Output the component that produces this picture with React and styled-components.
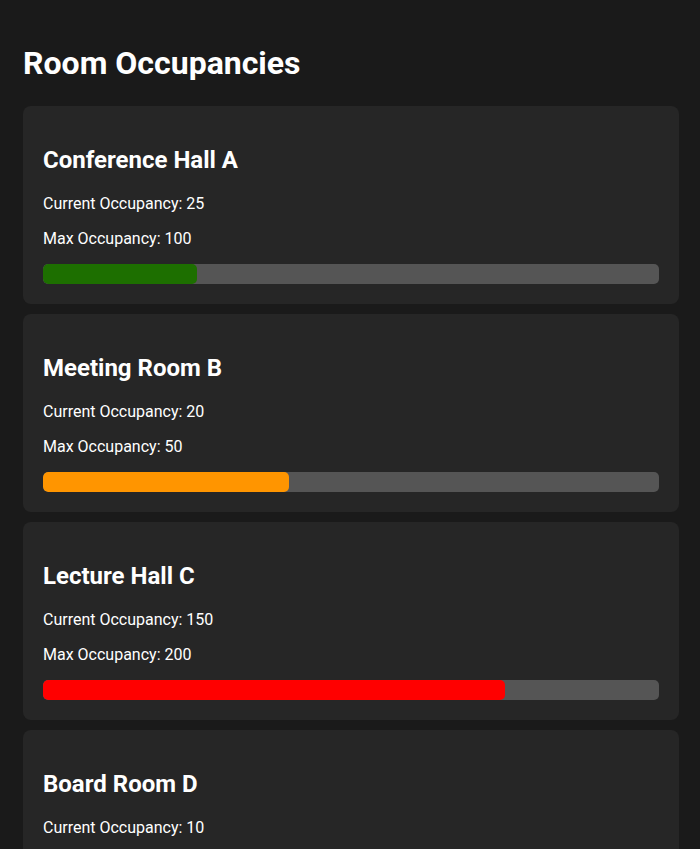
import React from "react";
import styled, { createGlobalStyle } from "styled-components";

const GlobalStyle = createGlobalStyle`
  html, body {
    margin: 0;
    background: #1a1a1a;
    color: #ffffff;
    font-family: Roboto, "Liberation Sans", sans-serif;
  }
`;

const Page = styled.div`
  padding: 0 21px 0 23px;
  min-height: 100vh;
`;

const Heading = styled.h1`
  font-size: 32px;
  font-weight: 700;
  margin: 45px 0 24px;
  line-height: 1.17;
`;

const Card = styled.div`
  background: #262626;
  border-radius: 8px;
  padding: 20px;
  margin-bottom: 10px;
`;

const RoomName = styled.h2`
  font-size: 24px;
  font-weight: 700;
  margin: 20px 0;
  line-height: 28px;
`;

const Stat = styled.p`
  font-size: 16px;
  margin: 15px 0;
  line-height: 20px;
`;

const Track = styled.div`
  height: 20px;
  background: #555555;
  border-radius: 5px;
  overflow: hidden;
`;

const Fill = styled.div`
  height: 100%;
  border-radius: 5px;
  background: ${(p) => p.$color};
`;

const rooms = [
  { name: "Conference Hall A", current: 25, max: 100 },
  { name: "Meeting Room B", current: 20, max: 50 },
  { name: "Lecture Hall C", current: 150, max: 200 },
  { name: "Board Room D", current: 10, max: 20 },
];

// colour by how full the room is
const fillColor = (ratio) => {
  if (ratio >= 0.7) return "#ff0000";
  if (ratio >= 0.4) return "#ff9500";
  return "#1d6f00";
};

export default function App() {
  return (
    <Page>
      <GlobalStyle />
      <Heading>Room Occupancies</Heading>
      {rooms.map((room) => {
        const ratio = room.current / room.max;
        return (
          <Card key={room.name}>
            <RoomName>{room.name}</RoomName>
            <Stat>Current Occupancy: {room.current}</Stat>
            <Stat>Max Occupancy: {room.max}</Stat>
            <Track>
              <Fill $color={fillColor(ratio)} style={{ width: `${ratio * 100}%` }} />
            </Track>
          </Card>
        );
      })}
    </Page>
  );
}
